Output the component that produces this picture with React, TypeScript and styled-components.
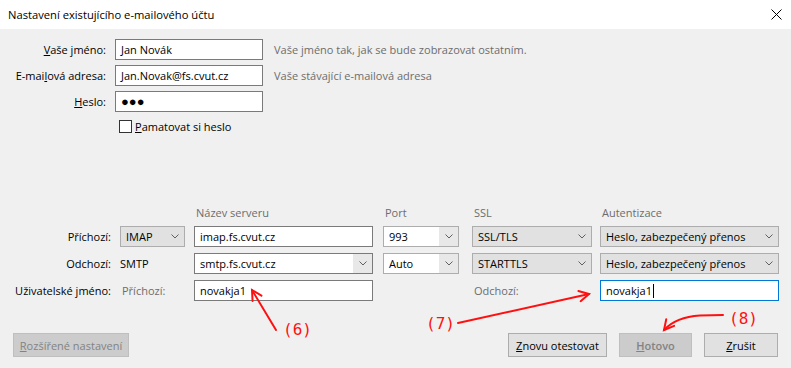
import React from "react";
import styled, { createGlobalStyle } from "styled-components";

const GlobalStyle = createGlobalStyle`
  html, body { margin: 0; padding: 0; }
  body {
    background: #f0f0f0;
    font-family: "Open Sans", "Noto Sans", "Liberation Sans", sans-serif;
    font-size: 11px;
    color: #000;
  }
  * { box-sizing: border-box; }
`;

const Dialog = styled.div`
  position: relative;
  width: 791px;
  height: 368px;
  display: flex;
  flex-direction: column;
  background: #f0f0f0;
  overflow: hidden;
`;

const TitleBar = styled.div`
  height: 29px;
  flex: none;
  background: #fff;
  display: flex;
  align-items: center;
  justify-content: space-between;
  padding: 0 9px 0 8px;
  font-size: 11.2px;
`;

const Body = styled.div`
  flex: 1;
  display: flex;
  flex-direction: column;
`;

const TopForm = styled.div`
  margin-top: 10px;
  display: grid;
  grid-template-columns: 106px 148px 1fr;
  column-gap: 9px;
  row-gap: 5px;
  align-items: center;
`;

const Label = styled.label<{ $muted?: boolean; $align?: "left" | "right"; $pad?: number }>`
  text-align: ${(p) => (p.$align === "left" ? "left" : "right")};
  padding-right: ${(p) => (p.$align === "left" ? 0 : p.$pad ?? 0)}px;
  padding-left: ${(p) => (p.$align === "left" ? p.$pad ?? 0 : 0)}px;
  color: ${(p) => (p.$muted ? "#6d6d6d" : "#000")};
  white-space: nowrap;
`;

const Hint = styled.span`
  color: #6d6d6d;
  white-space: nowrap;
  padding-left: 2px;
`;

const TextBox = styled.div<{ $w?: number; $focused?: boolean }>`
  width: ${(p) => (p.$w ? `${p.$w}px` : "100%")};
  height: 21px;
  background: #fff;
  border: 1px solid ${(p) => (p.$focused ? "#0078d7" : "#7a7a7a")};
  padding: 0 5px;
  display: flex;
  align-items: center;
  white-space: nowrap;
  overflow: hidden;
`;

const Dots = styled.span`
  font-size: 13px;
  line-height: 1;
`;

const Caret = styled.span`
  display: inline-block;
  width: 1px;
  height: 14px;
  background: #000;
  margin-left: 1px;
`;

const CheckRow = styled.div`
  grid-column: 2 / 4;
  display: flex;
  align-items: center;
  gap: 3px;
  padding-left: 4px;
  margin-top: 2px;
`;

const CheckBox = styled.span`
  width: 13px;
  height: 13px;
  border: 1px solid #333;
  background: #fff;
  flex: none;
`;

const ServerGrid = styled.div`
  margin-top: 70px;
  display: grid;
  grid-template-columns: 120px 74px 189px 89px 128px 179px;
  grid-template-rows: 16px 21px 21px 21px;
  row-gap: 6px;
  align-items: center;
`;

const ColHead = styled.span`
  color: #6d6d6d;
  padding-left: 2px;
  align-self: end;
  line-height: 14px;
  white-space: nowrap;
`;

const Select = styled.div<{ $w: number }>`
  width: ${(p) => p.$w}px;
  height: 21px;
  background: #e1e1e1;
  border: 1px solid #adadad;
  display: flex;
  align-items: center;
  justify-content: space-between;
  padding: 0 5px 0 5px;
  white-space: nowrap;
`;

const Combo = styled.div<{ $w: number; $dark?: boolean }>`
  width: ${(p) => p.$w}px;
  height: 21px;
  background: #fff;
  border: 1px solid ${(p) => (p.$dark ? "#7a7a7a" : "#adadad")};
  display: flex;
  align-items: stretch;
  white-space: nowrap;
`;

const ComboText = styled.span`
  flex: 1;
  display: flex;
  align-items: center;
  padding-left: 5px;
`;

const ComboButton = styled.span`
  width: 19px;
  flex: none;
  background: #e8e8e8;
  display: flex;
  align-items: center;
  justify-content: center;
`;

const PlainText = styled.span<{ $pad?: number }>`
  padding-left: ${(p) => p.$pad ?? 0}px;
  white-space: nowrap;
`;

const ButtonRow = styled.div`
  margin-top: auto;
  margin-bottom: 11px;
  display: flex;
  align-items: center;
  padding: 0 13px;
`;

const Button = styled.div<{ $disabled?: boolean; $default?: boolean; $w: number }>`
  width: ${(p) => p.$w}px;
  height: 24px;
  display: flex;
  align-items: center;
  justify-content: center;
  background: ${(p) => (p.$disabled ? "#cccccc" : "#e1e1e1")};
  border: 1px solid ${(p) => (p.$disabled ? "#bfbfbf" : "#adadad")};
  color: ${(p) => (p.$disabled ? "#838383" : "#000")};
  font-weight: ${(p) => (p.$default ? 600 : 400)};
  white-space: nowrap;
`;

const Spacer = styled.div`
  flex: 1;
`;

const ButtonGroup = styled.div`
  display: flex;
  gap: 12px;
`;

const Overlay = styled.svg`
  position: absolute;
  left: 0;
  top: 0;
  pointer-events: none;
`;

const AnnoText = styled.text`
  font-family: "DejaVu Sans Mono", "Liberation Mono", monospace;
  font-size: 16px;
  fill: #ff1010;
`;

const Chevron = () => (
  <svg width="8" height="5" viewBox="0 0 8 5">
    <path d="M0.5 0.5 L4 4 L7.5 0.5" fill="none" stroke="#606060" strokeWidth="1" />
  </svg>
);

const CloseIcon = () => (
  <svg width="11" height="11" viewBox="0 0 11 11">
    <path d="M0.5 0.5 L10.5 10.5 M10.5 0.5 L0.5 10.5" stroke="#000" strokeWidth="1" />
  </svg>
);

function head(tx: number, ty: number, fx: number, fy: number, len = 11, ang = 28) {
  const a = Math.atan2(fy - ty, fx - tx);
  const r = (ang * Math.PI) / 180;
  const p1 = [tx + len * Math.cos(a + r), ty + len * Math.sin(a + r)];
  const p2 = [tx + len * Math.cos(a - r), ty + len * Math.sin(a - r)];
  return `M${p1[0]} ${p1[1]} L${tx} ${ty} L${p2[0]} ${p2[1]}`;
}

export default function App() {
  return (
    <>
      <GlobalStyle />
      <Dialog>
        <TitleBar>
          <span>Nastavení existujícího e-mailového účtu</span>
          <CloseIcon />
        </TitleBar>
        <Body>
          <TopForm>
            <Label>
              <u>V</u>aše jméno:
            </Label>
            <TextBox>Jan Novák</TextBox>
            <Hint>Vaše jméno tak, jak se bude zobrazovat ostatním.</Hint>

            <Label>
              E-mai<u>l</u>ová adresa:
            </Label>
            <TextBox>Jan.Novak@fs.cvut.cz</TextBox>
            <Hint>Vaše stávající e-mailová adresa</Hint>

            <Label>
              <u>H</u>eslo:
            </Label>
            <TextBox>
              <Dots>●●●</Dots>
            </TextBox>
            <span />

            <CheckRow>
              <CheckBox />
              <span>
                <u>P</u>amatovat si heslo
              </span>
            </CheckRow>
          </TopForm>

          <ServerGrid>
            <span />
            <span />
            <ColHead>Název serveru</ColHead>
            <ColHead>Port</ColHead>
            <ColHead>SSL</ColHead>
            <ColHead>Autentizace</ColHead>

            <Label $pad={9}>Příchozí:</Label>
            <Select $w={65}>
              <span>IMAP</span>
              <Chevron />
            </Select>
            <TextBox $w={179}>imap.fs.cvut.cz</TextBox>
            <Combo $w={76}>
              <ComboText>993</ComboText>
              <ComboButton>
                <Chevron />
              </ComboButton>
            </Combo>
            <Select $w={120}>
              <span>SSL/TLS</span>
              <Chevron />
            </Select>
            <Select $w={179}>
              <span>Heslo, zabezpečený přenos</span>
              <Chevron />
            </Select>

            <Label $pad={9}>Odchozí:</Label>
            <PlainText>SMTP</PlainText>
            <Combo $w={179} $dark>
              <ComboText>smtp.fs.cvut.cz</ComboText>
              <ComboButton>
                <Chevron />
              </ComboButton>
            </Combo>
            <Combo $w={76}>
              <ComboText>Auto</ComboText>
              <ComboButton>
                <Chevron />
              </ComboButton>
            </Combo>
            <Select $w={120}>
              <span>STARTTLS</span>
              <Chevron />
            </Select>
            <Select $w={179}>
              <span>Heslo, zabezpečený přenos</span>
              <Chevron />
            </Select>

            <Label $pad={9}>Uživatelské jméno:</Label>
            <Label $muted $align="left" $pad={2}>
              Příchozí:
            </Label>
            <TextBox $w={179}>novakja1</TextBox>
            <span />
            <Label $muted $align="left" $pad={2}>
              Odchozí:
            </Label>
            <TextBox $w={179} $focused>
              novakja1
              <Caret />
            </TextBox>
          </ServerGrid>

          <ButtonRow>
            <Button $disabled $w={116}>
              <span>
                <u>R</u>ozšířené nastavení
              </span>
            </Button>
            <Spacer />
            <ButtonGroup>
              <Button $w={99}>
                <span>
                  <u>Z</u>novu otestovat
                </span>
              </Button>
              <Button $disabled $default $w={73}>
                <span>
                  <u>H</u>otovo
                </span>
              </Button>
              <Button $w={74}>
                <span>
                  <u>Z</u>rušit
                </span>
              </Button>
            </ButtonGroup>
          </ButtonRow>
        </Body>

        <Overlay width="791" height="368" viewBox="0 0 791 368">
          <g fill="none" stroke="#ff1010" strokeWidth="2" strokeLinecap="round">
            <path d="M276 330 L252 290" />
            <path d={head(252, 290, 276, 330)} />
            <path d="M458 323 L589 294" />
            <path d={head(589, 294, 458, 323)} />
            <path d="M723 315 L700 315.5 Q676 317 664 330" />
            <path d={head(664, 330, 674, 318)} />
          </g>
          <AnnoText x="283" y="335">(6)</AnnoText>
          <AnnoText x="426" y="329">(7)</AnnoText>
          <AnnoText x="729" y="324">(8)</AnnoText>
        </Overlay>
      </Dialog>
    </>
  );
}
